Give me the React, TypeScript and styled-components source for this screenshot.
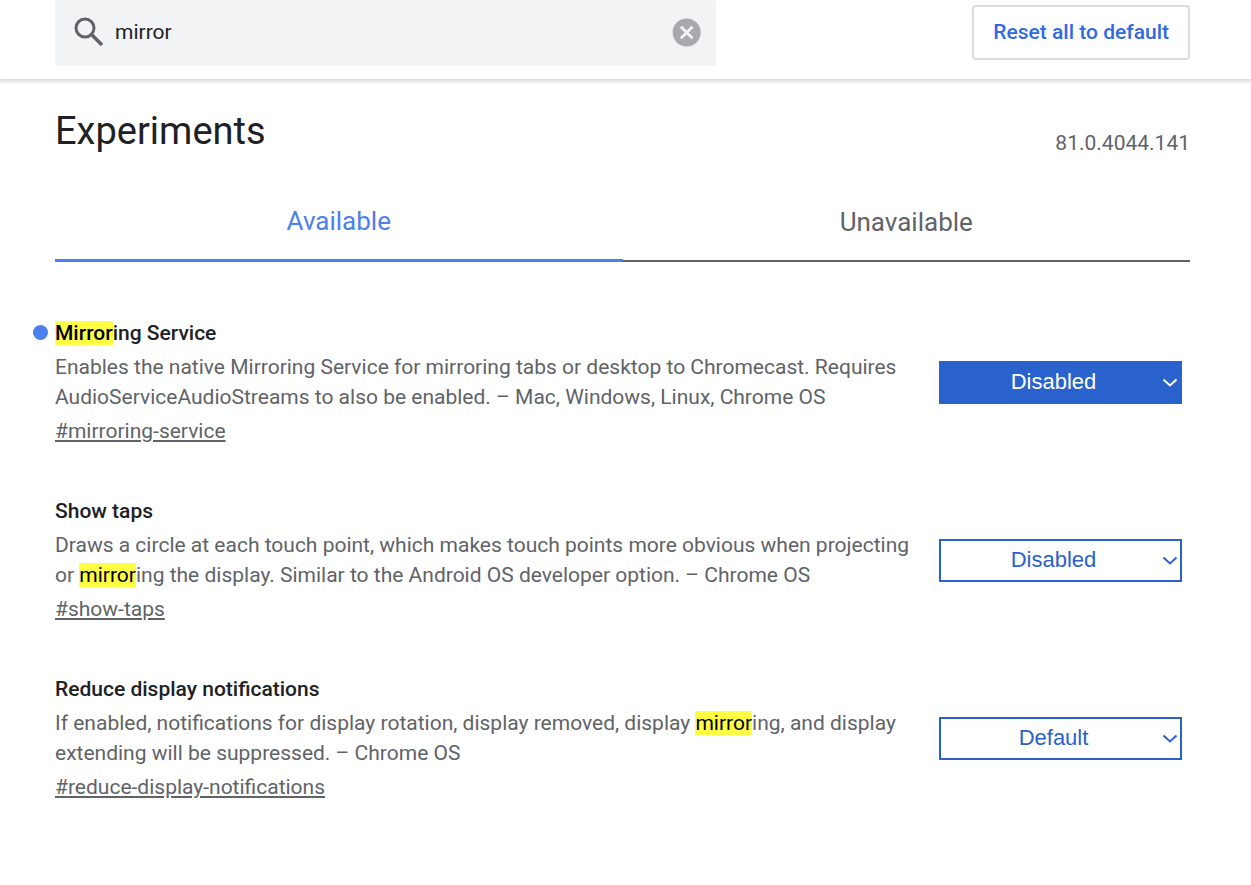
import React from "react";
import styled, { createGlobalStyle, css } from "styled-components";

const Global = createGlobalStyle`
  * { box-sizing: border-box; }
  body { margin: 0; background: #fff; color: #202124; font-family: Roboto, sans-serif; font-size: 21px; }
`;

const Header = styled.header`
  display: flex;
  justify-content: space-between;
  align-items: flex-start;
  height: 79px;
  padding: 0 61px 0 55px;
  box-shadow: 0 2px 3px 1px rgba(60, 64, 67, 0.18);
`;

const SearchBox = styled.div`
  display: flex;
  align-items: center;
  flex: 0 1 661px;
  height: 66px;
  padding: 0 14px 2px 18px;
  background: #f1f3f4;
  border-radius: 4px;
`;

const SearchInput = styled.input`
  flex: 1;
  min-width: 0;
  margin-left: 10px;
  padding: 0;
  border: 0;
  outline: 0;
  background: transparent;
  color: #202124;
  font: 400 21px/32px Roboto, sans-serif;
`;

const ClearButton = styled.button`
  display: flex;
  padding: 0;
  border: 0;
  background: transparent;
`;

const ResetButton = styled.button`
  height: 55px;
  margin-top: 5px;
  padding: 0 19px 2px;
  border: 2px solid #dadce0;
  border-radius: 4px;
  background: #fff;
  color: #2f6ae3;
  font: 500 21px/30px Roboto, sans-serif;
`;

const Main = styled.main`
  padding: 25px 61px 40px 55px;
`;

const TitleRow = styled.div`
  display: flex;
  justify-content: space-between;
  align-items: flex-end;
  height: 54px;
`;

const Title = styled.h1`
  margin: 0;
  align-self: flex-start;
  font-size: 38px;
  font-weight: 400;
  line-height: 54px;
`;

const Version = styled.span`
  color: #5f6368;
  line-height: 30px;
`;

const Tabs = styled.div`
  display: grid;
  grid-template-columns: 1fr 1fr;
  height: 80px;
  margin-top: 24px;
`;

const Tab = styled.button<{ $active?: boolean }>`
  padding: ${p => (p.$active ? "0" : "2px 0 0")};
  border: 0;
  border-bottom: ${p => (p.$active ? "3px solid #4b80ee" : "2px solid #5f6368")};
  background: transparent;
  color: ${p => (p.$active ? "#4b80ee" : "#5f6368")};
  font: 400 26px/36px Roboto, sans-serif;
`;

const List = styled.div`
  display: grid;
  gap: 50px;
  margin-top: 56px;
`;

const Row = styled.section`
  display: flex;
  align-items: center;
  justify-content: space-between;
  padding-right: 8px;
`;

const Info = styled.div`
  flex: 0 1 860px;
`;

const Name = styled.h2<{ $changed?: boolean }>`
  position: relative;
  margin: 0 0 4px;
  font-size: 21px;
  font-weight: 500;
  line-height: 30px;
  ${p => p.$changed && css`
    &::before {
      content: "";
      position: absolute;
      top: 7px;
      left: -22px;
      width: 15px;
      height: 15px;
      border-radius: 50%;
      background: #4b80ee;
    }
  `}
`;

const Description = styled.p`
  margin: 0 0 4px;
  color: #5f6368;
  line-height: 30px;
`;

const Permalink = styled.a`
  display: block;
  width: fit-content;
  color: #5f6368;
  line-height: 30px;
`;

const Mark = styled.mark`
  background: #ffff44;
  color: #000;
`;

const SelectWrap = styled.div`
  position: relative;
  flex: 0 0 243px;
`;

const Select = styled.select<{ $changed?: boolean }>`
  display: block;
  appearance: none;
  width: 100%;
  height: 43px;
  padding: 0 14px 0 0;
  border: 2px solid #2a62cd;
  border-radius: 0;
  background: ${p => (p.$changed ? "#2a62cd" : "#fff")};
  color: ${p => (p.$changed ? "#fff" : "#2a62cd")};
  font: 400 22px/30px "Liberation Sans", sans-serif;
  text-align: center;
  text-align-last: center;
`;

const Chevron = styled.svg<{ $changed?: boolean }>`
  position: absolute;
  top: 16px;
  right: 4px;
  pointer-events: none;
  stroke: ${p => (p.$changed ? "#fff" : "#2a62cd")};
`;

type Flag = {
  id: string;
  name: React.ReactNode;
  description: React.ReactNode;
  value: string;
  changed?: boolean;
};

const flags: Flag[] = [
  {
    id: "mirroring-service",
    name: <><Mark>Mirror</Mark>ing Service</>,
    description: "Enables the native Mirroring Service for mirroring tabs or desktop to Chromecast. Requires AudioServiceAudioStreams to also be enabled. – Mac, Windows, Linux, Chrome OS",
    value: "Disabled",
    changed: true,
  },
  {
    id: "show-taps",
    name: "Show taps",
    description: <>Draws a circle at each touch point, which makes touch points more obvious when projecting or <Mark>mirror</Mark>ing the display. Similar to the Android OS developer option. – Chrome OS</>,
    value: "Disabled",
  },
  {
    id: "reduce-display-notifications",
    name: "Reduce display notifications",
    description: <>If enabled, notifications for display rotation, display removed, display <Mark>mirror</Mark>ing, and display extending will be suppressed. – Chrome OS</>,
    value: "Default",
  },
];

export default function App() {
  return (
    <>
      <Global />
      <Header>
        <SearchBox>
          <svg width="32" height="32" viewBox="0 0 32 32" fill="none" stroke="#5f6368" strokeWidth="3" aria-hidden="true">
            <circle cx="12" cy="12" r="9" />
            <path d="M18 18l2.500 2.500" />
            <path d="M19.500 19.500l9.500 9.500" strokeWidth="3.600" />
          </svg>
          <SearchInput aria-label="Search flags" defaultValue="mirror" />
          <ClearButton aria-label="Clear search">
            <svg width="30" height="30" viewBox="0 0 30 30" aria-hidden="true">
              <circle cx="14.700" cy="15.500" r="14" fill="#a7aaac" />
              <path d="M8.900 9.700l11.600 11.600M20.500 9.700l-11.600 11.600" stroke="#f1f3f4" strokeWidth="2.800" />
            </svg>
          </ClearButton>
        </SearchBox>
        <ResetButton>Reset all to default</ResetButton>
      </Header>
      <Main>
        <TitleRow>
          <Title>Experiments</Title>
          <Version>81.0.4044.141</Version>
        </TitleRow>
        <Tabs role="tablist">
          <Tab role="tab" aria-selected="true" $active>Available</Tab>
          <Tab role="tab" aria-selected="false">Unavailable</Tab>
        </Tabs>
        <List>
          {flags.map(flag => (
            <Row key={flag.id} id={flag.id}>
              <Info>
                <Name $changed={flag.changed}>{flag.name}</Name>
                <Description>{flag.description}</Description>
                <Permalink href={`#${flag.id}`}>#{flag.id}</Permalink>
              </Info>
              <SelectWrap>
                <Select aria-label={flag.id} defaultValue={flag.value} $changed={flag.changed}>
                  <option>Default</option>
                  <option>Enabled</option>
                  <option>Disabled</option>
                </Select>
                <Chevron $changed={flag.changed} width="16" height="12" viewBox="0 0 16 12" fill="none" strokeWidth="2" aria-hidden="true">
                  <path d="M1.500 2.500l6.500 6 6.500-6" />
                </Chevron>
              </SelectWrap>
            </Row>
          ))}
        </List>
      </Main>
    </>
  );
}
